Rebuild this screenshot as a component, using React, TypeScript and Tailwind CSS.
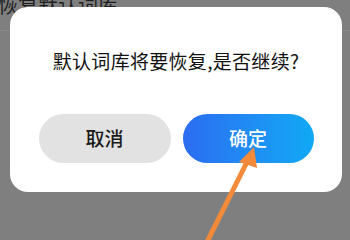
import React from 'react';

const cjk = { fontFamily: '"Noto Sans CJK SC", "Noto Sans", sans-serif' };

export default function App() {
  return (
    <div className="relative w-[350px] h-[240px] overflow-hidden bg-[#7f7f7f]" style={cjk}>
      {/* page behind the dimmed overlay */}
      <div className="h-[38px] border-b border-[#8a8a8a]">
        <div className="mt-[-7px] ml-[-2px] text-[20px] leading-[24px] text-[#1f1f1f]">恢复默认词库</div>
      </div>

      {/* dialog */}
      <div className="absolute left-[10px] top-[7px] w-[332px] h-[185px] rounded-[18px] bg-white flex flex-col items-center">
        <p className="mt-[42px] text-[19px] leading-[24px] text-[#111] tracking-[0.3px]">默认词库将要恢复,是否继续?</p>
        <div className="mt-[41px] flex gap-[12px]">
          <button className="w-[132px] h-[49px] rounded-full bg-[#e2e2e2] text-[19px] font-medium text-[#1a1a1a]">
            取消
          </button>
          <button className="w-[131px] h-[49px] rounded-full bg-gradient-to-r from-[#2b6cf1] to-[#10a9f5] text-[19px] font-medium text-white">
            确定
          </button>
        </div>
      </div>

      {/* annotation arrow */}
      <svg className="absolute inset-0 pointer-events-none" width="350" height="240" viewBox="0 0 350 240">
        <line x1="207" y1="242" x2="248" y2="160" stroke="#f28a3b" strokeWidth="5" />
        <polygon points="254,147 239,162 257,168" fill="#f28a3b" />
      </svg>
    </div>
  );
}
